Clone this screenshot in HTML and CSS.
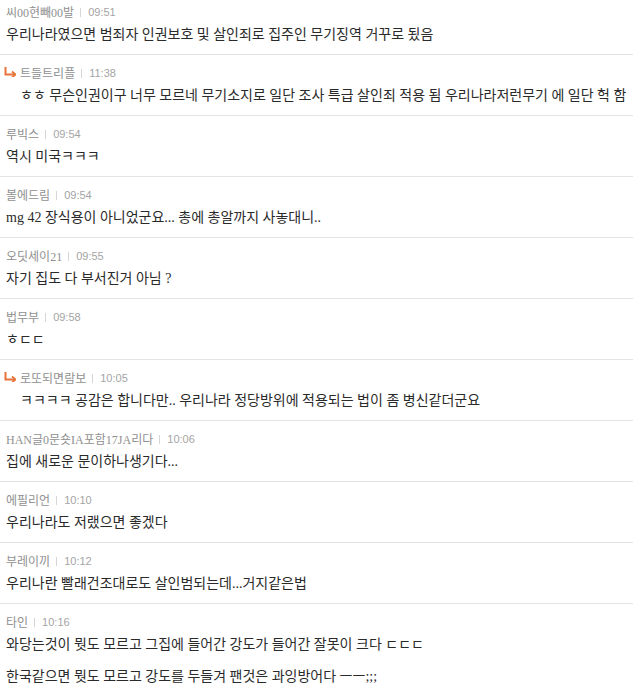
FILE: index.html
```html
<!DOCTYPE html>
<html lang="ko">
<head>
  <meta charset="UTF-8" />
  <meta name="viewport" content="width=device-width, initial-scale=1.0"/>
  <title>댓글</title>
  <link rel="stylesheet" href="styles.css">
</head>
<body>

  <ul class="comments">
    <li class="comment first">
      <div class="meta"><span class="nick">씨00현빼00발</span><span class="bar"></span><span class="time">09:51</span></div>
      <p class="text">우리나라였으면 범죄자 인권보호 및 살인죄로 집주인 무기징역 거꾸로 됬음</p>
    </li>
    <li class="comment reply">
      <div class="meta">
        <svg class="arrow" width="12" height="10" viewBox="0 0 12 10"><path d="M1.5 0 V7.5 H10" fill="none" stroke="#e8733a" stroke-width="2"/><path d="M8 4.5 L11.5 7.5 L8 10.5" fill="none" stroke="#e8733a" stroke-width="1.8"/></svg>
        <span class="nick">트들트리플</span><span class="bar"></span><span class="time">11:38</span>
      </div>
      <p class="text">ㅎㅎ 무슨인권이구 너무 모르네 무기소지로 일단 조사 특급 살인죄 적용 됨 우리나라저런무기 에 일단 헉 함</p>
    </li>
    <li class="comment">
      <div class="meta"><span class="nick">루빅스</span><span class="bar"></span><span class="time">09:54</span></div>
      <p class="text">역시 미국ㅋㅋㅋ</p>
    </li>
    <li class="comment">
      <div class="meta"><span class="nick">볼에드림</span><span class="bar"></span><span class="time">09:54</span></div>
      <p class="text">mg 42 장식용이 아니었군요... 총에 총알까지 사놓대니..</p>
    </li>
    <li class="comment">
      <div class="meta"><span class="nick">오딧세이21</span><span class="bar"></span><span class="time">09:55</span></div>
      <p class="text">자기 집도 다 부서진거 아님 ?</p>
    </li>
    <li class="comment">
      <div class="meta"><span class="nick">법무부</span><span class="bar"></span><span class="time">09:58</span></div>
      <p class="text">ㅎㄷㄷ</p>
    </li>
    <li class="comment reply">
      <div class="meta">
        <svg class="arrow" width="12" height="10" viewBox="0 0 12 10"><path d="M1.5 0 V7.5 H10" fill="none" stroke="#e8733a" stroke-width="2"/><path d="M8 4.5 L11.5 7.5 L8 10.5" fill="none" stroke="#e8733a" stroke-width="1.8"/></svg>
        <span class="nick">로또되면람보</span><span class="bar"></span><span class="time">10:05</span>
      </div>
      <p class="text">ㅋㅋㅋㅋ 공감은 합니다만.. 우리나라 정당방위에 적용되는 법이 좀 병신같더군요</p>
    </li>
    <li class="comment">
      <div class="meta"><span class="nick">HAN글0문숏IA포함17JA리다</span><span class="bar"></span><span class="time">10:06</span></div>
      <p class="text">집에 새로운 문이하나생기다...</p>
    </li>
    <li class="comment">
      <div class="meta"><span class="nick">에필리언</span><span class="bar"></span><span class="time">10:10</span></div>
      <p class="text">우리나라도 저랬으면 좋겠다</p>
    </li>
    <li class="comment">
      <div class="meta"><span class="nick">부레이끼</span><span class="bar"></span><span class="time">10:12</span></div>
      <p class="text">우리나란 빨래건조대로도 살인범되는데...거지같은법</p>
    </li>
    <li class="comment">
      <div class="meta"><span class="nick">타인</span><span class="bar"></span><span class="time">10:16</span></div>
      <p class="text">와당는것이 뭣도 모르고 그집에 들어간 강도가 들어간 잘못이 크다 ㄷㄷㄷ</p>
      <p class="text">한국같으면 뭣도 모르고 강도를 두들겨 팬것은 과잉방어다 ㅡㅡ;;;</p>
    </li>
  </ul>

</body>
</html>
```

FILE: styles.css
```css
:root {
  --line: #e3e3e3;
  --nick: #909090;
  --time: #a4a4a4;
  --text: #2a2a2a;
}

* {
  box-sizing: border-box;
  margin: 0;
  padding: 0;
}

body {
  background: #ffffff;
  color: var(--text);
  font-family: 'Liberation Serif', 'Noto Sans CJK KR', serif;
}

.comments {
  list-style: none;
}

.comment {
  padding: 11px 6px 10px;
  border-bottom: 1px solid var(--line);
}

.comment.first {
  padding-top: 5px;
}

.comment:last-child {
  border-bottom: none;
}

.meta {
  display: flex;
  align-items: center;
  height: 14px;
  font-size: 12px;
  color: var(--nick);
}

.reply .text {
  padding-left: 14px;
}

.arrow {
  margin: 0 4px 0 -2px;
  position: relative;
  top: -1px;
}

.bar {
  width: 1px;
  height: 9px;
  background: #d6d6d6;
  margin: 0 7px 0 6px;
}

.time {
  font-family: 'Liberation Sans', 'DejaVu Sans', sans-serif;
  font-size: 11px;
  color: var(--time);
}

.text {
  margin-top: 7px;
  font-size: 14px;
  line-height: 18px;
  white-space: nowrap;
}

.text + .text {
  margin-top: 14px;
}
```
